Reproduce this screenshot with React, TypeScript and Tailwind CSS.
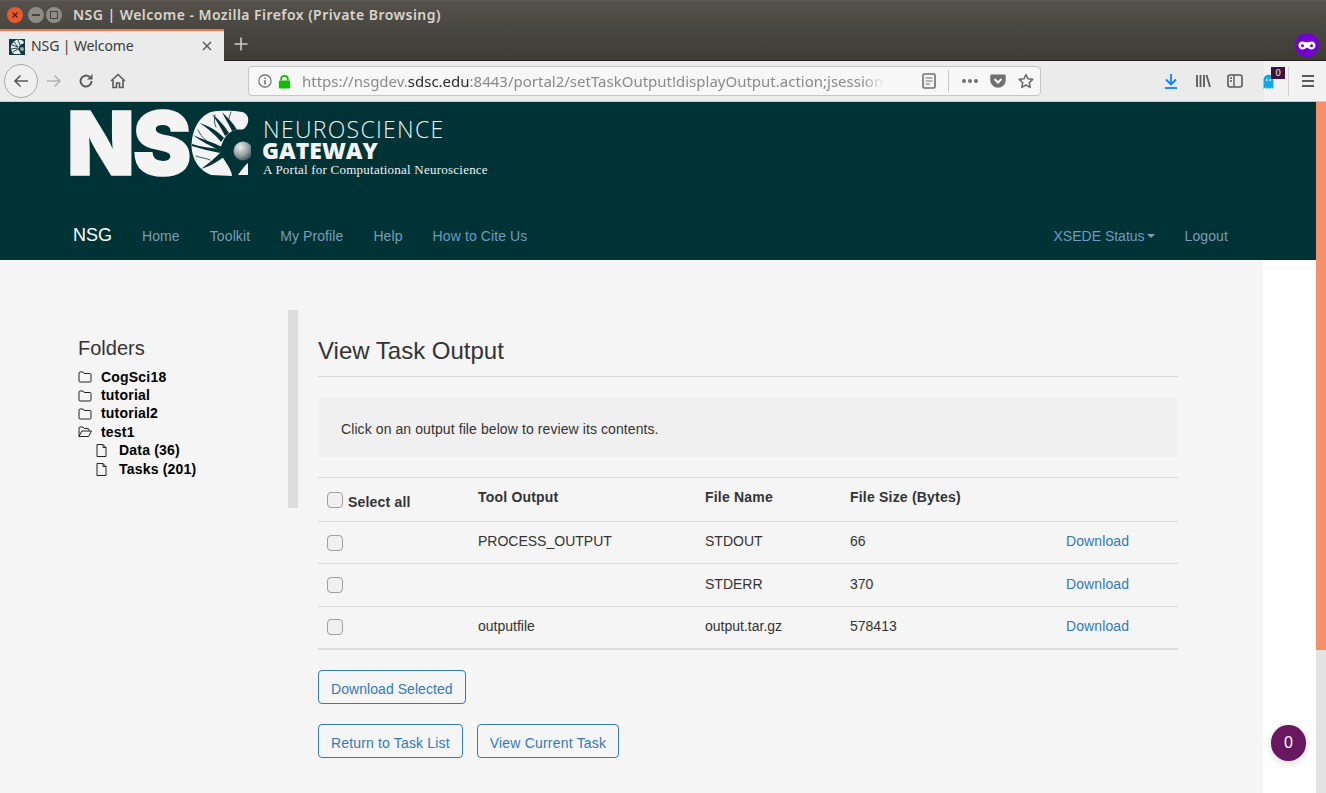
const sans = "font-['Liberation_Sans',Arial,sans-serif]";

function BrainC() {
  return (
    <svg viewBox="0 0 62 70" className="w-[62px] h-[70px] -ml-[1px] shrink-0">
      <defs>
        <radialGradient id="ball" cx="35%" cy="30%" r="75%">
          <stop offset="0%" stopColor="#e8eeee" />
          <stop offset="55%" stopColor="#9aa8a8" />
          <stop offset="100%" stopColor="#3f5658" />
        </radialGradient>
      </defs>
      <path
        d="M22 3 C34 1 46 2 53 3 C58 4 60 9 59 13 C58 17 56 20 53 20.5 C47 20 41 22 37 27 C34 31 33 35 31 40 C31 45 35 50 38 55 C41 60 43 64 43 67 L22 66 C12 62 5 54 3 42 C1 26 8 8 22 3 Z"
        fill="#f4f4f4"
      />
      <g fill="#003336">
        <path d="M33 38 C24 33 14 31 4 26 C13 33 22 37 30 41 Z" />
        <path d="M35 29 C29 22 20 17 11 14 C19 20 27 26 32 33 Z" />
        <path d="M40 24 C36 17 29 10 23 5 C27 11 32 19 36 27 Z" />
        <path d="M48 21 C45 15 39 9 33 3 C36 9 40 16 43 22 Z" />
        <path d="M32 40 C22 39 12 38 3 35 L3 37 C12 40 22 42 31 44 Z" />
        <path d="M32 43 C26 49 19 55 12 60 C19 58 28 53 35 48 Z" />
      </g>
      <g fill="none" stroke="#003336" strokeLinecap="round" strokeWidth="0.8">
        <path d="M27 18 C25 14 25 10 26 6" />
        <path d="M19 33 C15 30 12 27 9 21" />
        <path d="M21 51 C17 49 12 49 7 47" />
        <path d="M40 10 C40 8 41 6 42 3" />
      </g>
      <path d="M49 66 C52 62 55 57 59 54 L59 66 Z" fill="#f4f4f4" />
      <circle cx="54" cy="42" r="9.5" fill="url(#ball)" />
    </svg>
  );
}

function Logo() {
  return (
    <div className="flex items-start pl-[67px] pt-[7px] h-[106px]">
      <span className="font-['Inter',sans-serif] font-black text-[#f4f4f4] text-[88px] leading-[68px] tracking-[-2px] w-[123px] h-[70px] shrink-0 [-webkit-text-stroke:1.5px_#f4f4f4]">
        NS
      </span>
      <BrainC />
      <div className="flex flex-col ml-[12px] mt-[7px]">
        <span className="font-['Open_Sans',sans-serif] font-light text-[#eef2f2] text-[23px] leading-[26px] tracking-[1.3px]">
          NEUROSCIENCE
        </span>
        <span className="font-['Open_Sans',sans-serif] font-extrabold text-[#f4f4f4] text-[23px] leading-[16px] -ml-px">
          GATEWAY
        </span>
        <span className="font-['Liberation_Serif',serif] text-[#eef2f2] text-[13px] leading-[18px] mt-[3px] tracking-[0.23px]">
          A Portal for Computational Neuroscience
        </span>
      </div>
    </div>
  );
}

function NavBar() {
  return (
    <nav className="flex items-center h-[52px] pt-[4px] pl-[58px] pr-[73px] text-sm tracking-[0.1px]">
      <a className="px-[15px] text-[18px] tracking-normal text-white">NSG</a>
      <a className="px-[15px] text-[#7a9db5]">Home</a>
      <a className="px-[15px] text-[#7a9db5]">Toolkit</a>
      <a className="px-[15px] text-[#7a9db5]">My Profile</a>
      <a className="px-[15px] text-[#7a9db5]">Help</a>
      <a className="px-[15px] text-[#6d9cc0]">How to Cite Us</a>
      <a className="ml-auto px-[15px] text-[#6d9cc0] flex items-center">
        <span className="tracking-normal">XSEDE Status</span>
        <span className="ml-[2px] border-x-[4px] border-x-transparent border-t-[4px] border-t-[#7a9db5]" />
      </a>
      <a className="px-[15px] text-[#7a9db5]">Logout</a>
    </nav>
  );
}

function Favicon() {
  return (
    <svg viewBox="0 0 16 16" className="w-4 h-4 shrink-0">
      <rect width="16" height="16" fill="#0e3a3e" />
      <path d="M7 1 C11 0 15 1 15 4 L11 6 L9 10 L12 15 L5 15 C1 12 0 5 7 1 Z" fill="#e8eeee" />
      <path d="M3 6 L9 8 M5 3 L9 8 M9 1 L11 6 M2 10 L9 9 M4 13 L9 10" stroke="#0e3a3e" strokeWidth="0.9" />
      <circle cx="13" cy="10" r="2" fill="#9aa8a8" />
    </svg>
  );
}

function TitleBar() {
  return (
    <div className="h-[28px] flex items-center pl-[7px] border-t border-[#5d5a53]">
      <span className="w-4 h-4 rounded-full bg-[#e9582e] flex items-center justify-center">
        <svg viewBox="0 0 8 8" className="w-2 h-2">
          <path d="M1.5 1.5 L6.5 6.5 M6.5 1.5 L1.5 6.5" stroke="#4a2412" strokeWidth="1.2" />
        </svg>
      </span>
      <span className="w-4 h-4 rounded-full bg-[#8d8b84] ml-[5px] flex items-center justify-center">
        <span className="w-2 h-[2px] bg-[#45433e]" />
      </span>
      <span className="w-4 h-4 rounded-full bg-[#8d8b84] ml-[2px] flex items-center justify-center">
        <span className="w-[8px] h-[8px] border border-[#45433e]" />
      </span>
      <span className="ml-[11px] font-['Noto_Sans',sans-serif] font-semibold text-[14px] tracking-[0.45px] text-[#d8d5cc]">
        NSG | Welcome - Mozilla Firefox (Private Browsing)
      </span>
    </div>
  );
}

function TabStrip() {
  return (
    <div className="h-[33px] flex border-b border-[#232220]">
      <div className="w-[224px] h-[33px] bg-[#ebebeb] border-t-2 border-[#f0764a] mt-[1px] flex items-center pl-[9px] pr-[11px] -mb-[1px]">
        <Favicon />
        <span className="ml-[6px] pb-[3px] font-['Noto_Sans',sans-serif] text-[14px] tracking-[-0.1px] text-[#3a3a3a]">
          NSG | Welcome
        </span>
        <svg viewBox="0 0 12 12" className="w-[12px] h-[12px] ml-auto -mt-[1px]">
          <path d="M2 2 L10 10 M10 2 L2 10" stroke="#555" strokeWidth="1.4" />
        </svg>
      </div>
      <svg viewBox="0 0 16 16" className="w-4 h-4 ml-[9px] mt-[8px]">
        <path d="M8 1.5 V14.5 M1.5 8 H14.5" stroke="#cfcdc8" strokeWidth="1.6" />
      </svg>
      <span className="ml-auto mr-[7px] mt-[5px] w-[24px] h-[24px] rounded-full bg-[#7300d0] flex items-center justify-center">
        <svg viewBox="0 0 20 10" className="w-[18px] h-[9px]">
          <path
            d="M5 0.5 C7 0.5 8.5 1.5 10 1.5 C11.5 1.5 13 0.5 15 0.5 C18 0.5 19.5 2.5 19.5 5 C19.5 7.5 17.5 9.5 15 9.5 C12.5 9.5 11.5 7.5 10 7.5 C8.5 7.5 7.5 9.5 5 9.5 C2.5 9.5 0.5 7.5 0.5 5 C0.5 2.5 2 0.5 5 0.5 Z M5 3.5 A1.7 1.7 0 1 0 5.01 3.5 Z M15 3.5 A1.7 1.7 0 1 0 15.01 3.5 Z"
            fill="#fff"
            fillRule="evenodd"
          />
        </svg>
      </span>
    </div>
  );
}

function ToolIcon({ children }: { children: React.ReactNode }) {
  return (
    <svg viewBox="0 0 16 16" className="w-4 h-4 mx-2 shrink-0" fill="none" stroke="#5a5a5a" strokeWidth="1.6">
      {children}
    </svg>
  );
}

function Toolbar() {
  return (
    <div className="h-[41px] flex items-center bg-[#ebebeb] border-b border-[#c9c9c9]">
      <span className="ml-[4px] w-[34px] h-[34px] rounded-full border border-[#a9a9a9] bg-[#f0f0f0] flex items-center justify-center shrink-0">
        <svg viewBox="0 0 16 16" className="w-4 h-4 -ml-[1px]" fill="none" stroke="#5a5a5a" strokeWidth="1.6">
          <path d="M15 8 H2 M7.5 2.5 L2 8 L7.5 13.5" />
        </svg>
      </span>
      <ToolIcon>
        <g stroke="#b3b3b3">
          <path d="M1 8 H14 M8.5 2.5 L14 8 L8.5 13.5" />
        </g>
      </ToolIcon>
      <ToolIcon>
        <path d="M13.5 8 A5.5 5.5 0 1 1 11.5 3.8" strokeWidth="2" />
        <path d="M14.5 1 V6.5 H9 Z" fill="#5a5a5a" stroke="none" />
      </ToolIcon>
      <ToolIcon>
        <path d="M1 8 L8 1.5 L15 8" strokeWidth="1.6" />
        <path d="M3 7 V14.5 H6.5 V10 H9.5 V14.5 H13 V7" strokeWidth="1.6" />
      </ToolIcon>
      <div className="ml-[114px] w-[793px] h-[30px] rounded-[4px] border border-[#c6c6c6] bg-[#f7f7f7] flex items-center shrink-0">
        <svg viewBox="0 0 16 16" className="w-[14px] h-[14px] ml-[9px] shrink-0" fill="none" stroke="#5f5f5f" strokeWidth="1.2">
          <circle cx="8" cy="8" r="7" />
          <path d="M8 7 V12 M8 4 V5.6" strokeWidth="1.6" />
        </svg>
        <svg viewBox="0 0 14 16" className="w-[13px] h-[15px] ml-[6px] shrink-0">
          <path d="M3.5 7 V4.8 C3.5 1 10.5 1 10.5 4.8 V7" fill="none" stroke="#12bc00" strokeWidth="2" />
          <rect x="1" y="7" width="12" height="8.5" rx="1" fill="#12bc00" />
        </svg>
        <div className="ml-[11px] w-[583px] overflow-hidden whitespace-nowrap font-['Noto_Sans',sans-serif] text-[15px] text-[#8a8a8a] shrink-0 [mask-image:linear-gradient(to_right,black_96%,transparent)]">
          https://nsgdev.<span className="text-[#2a2a2a]">sdsc.edu</span>:8443/portal2/setTaskOutput!displayOutput.action;jsessionid
        </div>
        <svg viewBox="0 0 14 16" className="w-[14px] h-[16px] ml-[37px] shrink-0" fill="none" stroke="#707070" strokeWidth="1.6">
          <rect x="1" y="1" width="12" height="14" rx="1.5" />
          <path d="M3.5 5 H10.5 M3.5 8 H10.5 M3.5 11 H8" strokeWidth="1.2" />
        </svg>
        <span className="ml-[12px] w-px h-[22px] bg-[#c6c6c6] shrink-0" />
        <span className="ml-[13px] flex gap-[2px] shrink-0">
          <span className="w-[4px] h-[4px] rounded-full bg-[#707070]" />
          <span className="w-[4px] h-[4px] rounded-full bg-[#707070]" />
          <span className="w-[4px] h-[4px] rounded-full bg-[#707070]" />
        </span>
        <svg viewBox="0 0 16 14" className="w-[16px] h-[14px] ml-[12px] shrink-0">
          <path d="M1.5 0.5 H14.5 C15.2 0.5 15.7 1 15.7 1.7 V6 C15.7 10.5 12 13.7 8 13.7 C4 13.7 0.3 10.5 0.3 6 V1.7 C0.3 1 0.8 0.5 1.5 0.5 Z" fill="#707070" />
          <path d="M4.5 5 L8 8.5 L11.5 5" fill="none" stroke="#f7f7f7" strokeWidth="2" />
        </svg>
        <svg viewBox="0 0 16 16" className="w-4 h-4 ml-[12px] shrink-0" fill="none" stroke="#707070" strokeWidth="1.6">
          <path d="M8 1.5 L10 5.8 L14.8 6.4 L11.3 9.6 L12.2 14.4 L8 12 L3.8 14.4 L4.7 9.6 L1.2 6.4 L6 5.8 Z" strokeLinejoin="round" />
        </svg>
      </div>
      <svg viewBox="0 0 16 16" className="w-4 h-4 ml-[122px] mr-2 shrink-0" fill="none" stroke="#0a84ff" strokeWidth="1.8">
        <path d="M8 1 V10.5 M3 6.5 L8 11.5 L13 6.5" />
        <path d="M2 15 H14" />
      </svg>
      <ToolIcon>
        <path d="M2 2 V14 M5.5 2 V14 M9 2 V14 M11.5 2 L15 14" strokeWidth="1.8" />
      </ToolIcon>
      <ToolIcon>
        <rect x="1" y="2" width="14" height="12" rx="2" />
        <path d="M7 2 V14 M3 5 H5 M3 8 H5" strokeWidth="1.4" />
      </ToolIcon>
      <div className="ml-[13px] w-[63px] h-[40px] bg-[#f2f2f2] flex items-center relative shrink-0">
        <svg viewBox="0 0 12 16" className="w-[13px] h-[16px] -ml-[2px] mt-[2px] shrink-0">
          <path d="M1 6 C1 -1 11 -1 11 6 V15 L9 13.5 L7.5 15 L6 13.5 L4.5 15 L3 13.5 L1 15 Z" fill="#12a8f0" />
          <circle cx="4.3" cy="6" r="0.9" fill="#f2f2f2" />
          <circle cx="7.7" cy="6" r="0.9" fill="#f2f2f2" />
        </svg>
        <span className="absolute left-[7px] top-[6px] w-[14px] h-[12px] bg-[#3d1240] text-[#f5e6c8] font-['DejaVu_Sans',sans-serif] text-[9px] leading-[12px] text-center">
          0
        </span>
        <span className="ml-[13px] w-px h-[30px] bg-[#d0d0d0]" />
        <svg viewBox="0 0 14 14" className="w-[14px] h-[14px] ml-[12px]" fill="none" stroke="#5a5a5a" strokeWidth="1.8">
          <path d="M1 2 H13 M1 7 H13 M1 12 H13" />
        </svg>
      </div>
    </div>
  );
}

function FolderIcon({ open }: { open?: boolean }) {
  return (
    <svg viewBox="0 0 14 12" className="w-[14px] h-[12px] shrink-0" fill="none" stroke="#222" strokeWidth="1">
      {open ? (
        <path d="M1 10.5 V2 C1 1.5 1.4 1 2 1 H5 L6.2 2.5 H10 C10.6 2.5 11 3 11 3.5 V5 M1 10.5 H10.5 L13.5 5 H3.8 L1 10.5 Z" strokeLinejoin="round" />
      ) : (
        <path d="M1 2 C1 1.5 1.4 1 2 1 H5 L6.2 2.5 H12 C12.6 2.5 13 3 13 3.5 V10 C13 10.6 12.6 11 12 11 H2 C1.4 11 1 10.6 1 10 Z" strokeLinejoin="round" />
      )}
    </svg>
  );
}

function FileIcon() {
  return (
    <svg viewBox="0 0 11 13" className="w-[11px] h-[13px] shrink-0" fill="none" stroke="#222" strokeWidth="1">
      <path d="M1 0.5 H7 L10 3.5 V12.5 H1 Z M7 0.5 V3.5 H10" strokeLinejoin="round" />
    </svg>
  );
}

const folders = ["CogSci18", "tutorial", "tutorial2", "test1"];
const files = ["Data (36)", "Tasks (201)"];

function Sidebar() {
  return (
    <aside className="w-[220px] h-[198px] ml-[78px] mt-[50px] shrink-0 border-r-[10px] border-[#dddddd]">
      <h3 className="text-[20px] leading-[22px] text-[#333] mt-[27px] mb-[9px]">Folders</h3>
      <ul className="text-[14px] font-bold tracking-[0.2px] text-black">
        {folders.map((f) => (
          <li key={f} className="flex items-center h-[18.4px]">
            <span className="w-[23px]">
              <FolderIcon open={f === "test1"} />
            </span>
            {f}
          </li>
        ))}
        {files.map((f) => (
          <li key={f} className="flex items-center h-[18.4px] pl-[18px]">
            <span className="w-[23px]">
              <FileIcon />
            </span>
            {f}
          </li>
        ))}
      </ul>
    </aside>
  );
}

function Check({ className = "" }: { className?: string }) {
  return (
    <span className={`block w-4 h-4 rounded-[4px] border border-[#a0a0a0] bg-[#f0f0f0] ${className}`} />
  );
}

const rows = [
  { tool: "PROCESS_OUTPUT", file: "STDOUT", size: "66", h: "h-[42px]" },
  { tool: "", file: "STDERR", size: "370", h: "h-[43px]" },
  { tool: "outputfile", file: "output.tar.gz", size: "578413", h: "h-[42px]" },
];

function OutputTable() {
  return (
    <table className="w-full table-fixed border-t border-[#dddddd] mt-[20px] text-[14px] text-[#333]">
      <thead>
        <tr className="h-[44px] border-b border-[#dddddd] text-left tracking-[0.2px]">
          <th className="w-[150px] pl-[9px] font-bold">
            <span className="flex items-end">
              <Check />
              <span className="ml-[5px] -mb-[5px]">Select all</span>
            </span>
          </th>
          <th className="w-[227px] pl-[10px] pb-[4px] font-bold">Tool Output</th>
          <th className="w-[145px] pl-[10px] pb-[4px] font-bold">File Name</th>
          <th className="w-[216px] pl-[10px] pb-[4px] font-bold">File Size (Bytes)</th>
          <th />
        </tr>
      </thead>
      <tbody>
        {rows.map((r) => (
          <tr key={r.file} className={`${r.h} border-b border-[#dddddd] last:border-b-2`}>
            <td className="pl-[9px]">
              <Check />
            </td>
            <td className="pl-[10px] pb-[2px]">{r.tool}</td>
            <td className="pl-[10px] pb-[2px]">{r.file}</td>
            <td className="pl-[10px] pb-[2px]">{r.size}</td>
            <td className="pl-[10px] pb-[2px] text-[#337ab7] tracking-[0.1px]">Download</td>
          </tr>
        ))}
      </tbody>
    </table>
  );
}

function OutlineButton({ label, spacing }: { label: string; spacing: string }) {
  return (
    <button className={`h-[34px] px-[12px] pt-[5px] rounded-[4px] border border-[#337ab7] text-[14px] text-[#337ab7] ${spacing}`}>
      {label}
    </button>
  );
}

function TaskOutput() {
  return (
    <main className="w-[860px] ml-[20px] mt-[50px] shrink-0">
      <h2 className="text-[24px] leading-[26px] text-[#333] mt-[28px] pb-[12px] border-b border-[#d8d8d8]">
        View Task Output
      </h2>
      <div className="mt-[20px] h-[60px] bg-[#f0f0f0] rounded-[3px] flex items-center pl-[23px] pt-[5px] text-[14px] tracking-[0.09px] text-[#333]">
        Click on an output file below to review its contents.
      </div>
      <OutputTable />
      <div className="mt-[20px]">
        <OutlineButton label="Download Selected" spacing="tracking-[0.06px]" />
      </div>
      <div className="mt-[20px] flex gap-[14px]">
        <OutlineButton label="Return to Task List" spacing="tracking-[0.16px]" />
        <OutlineButton label="View Current Task" spacing="tracking-[0.2px]" />
      </div>
    </main>
  );
}

export default function App() {
  return (
    <div className={`${sans} w-[1326px] h-[793px] overflow-hidden flex flex-col bg-white relative`}>
      <div className="bg-gradient-to-b from-[#55524b] to-[#3c3b36]">
        <TitleBar />
        <TabStrip />
      </div>
      <Toolbar />
      <div className="flex flex-1 min-h-0">
        <div className="flex-1 flex flex-col min-w-0">
          <header className="bg-[#003336] h-[158px] shrink-0">
            <Logo />
            <NavBar />
          </header>
          <div className="flex flex-1 min-h-0 bg-white">
            <div className="w-[1263px] bg-[#f5f5f5] flex items-start shrink-0">
              <Sidebar />
              <TaskOutput />
            </div>
          </div>
        </div>
        <div className="w-[10px] bg-[#e3e3e3] shrink-0">
          <div className="h-[548px] bg-[#f4906a]" />
        </div>
      </div>
      <span className="absolute left-[1271px] top-[725px] w-[35px] h-[36px] rounded-full bg-[#681761] text-white text-[16px] flex items-center justify-center shadow-[0_2px_8px_rgba(0,0,0,0.15)]">
        0
      </span>
    </div>
  );
}
